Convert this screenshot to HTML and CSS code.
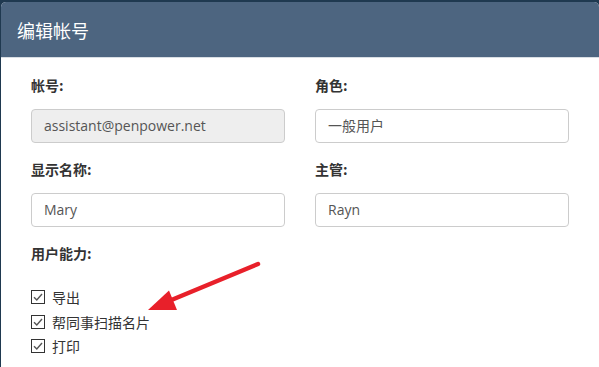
FILE: index.html
```html
<!DOCTYPE html>
<html lang="zh-CN">
<head>
    <meta charset="UTF-8">
    <title>编辑帐号</title>
    <link rel="stylesheet" href="styles.css">
</head>
<body>
    <div class="modal">
        <div class="modal-header">
            <h4 class="modal-title">编辑帐号</h4>
        </div>
        <div class="modal-body">
            <div class="form-grid">
                <div class="form-group">
                    <label class="field-label">帐号:</label>
                    <div class="form-control readonly">assistant@penpower.net</div>
                </div>
                <div class="form-group">
                    <label class="field-label">角色:</label>
                    <div class="form-control">一般用户</div>
                </div>
                <div class="form-group">
                    <label class="field-label">显示名称:</label>
                    <div class="form-control">Mary</div>
                </div>
                <div class="form-group">
                    <label class="field-label">主管:</label>
                    <div class="form-control">Rayn</div>
                </div>
            </div>

            <label class="field-label">用户能力:</label>
            <ul class="check-list">
                <li>
                    <svg class="check-box" width="14" height="14" viewBox="0 0 14 14"><rect x="0.5" y="0.5" width="13" height="13" fill="#fff" stroke="#333"/><path d="M3 7.2 L5.8 10 L11 4" fill="none" stroke="#555" stroke-width="1.4"/></svg>
                    导出
                </li>
                <li>
                    <svg class="check-box" width="14" height="14" viewBox="0 0 14 14"><rect x="0.5" y="0.5" width="13" height="13" fill="#fff" stroke="#333"/><path d="M3 7.2 L5.8 10 L11 4" fill="none" stroke="#555" stroke-width="1.4"/></svg>
                    帮同事扫描名片
                </li>
                <li>
                    <svg class="check-box" width="14" height="14" viewBox="0 0 14 14"><rect x="0.5" y="0.5" width="13" height="13" fill="#fff" stroke="#333"/><path d="M3 7.2 L5.8 10 L11 4" fill="none" stroke="#555" stroke-width="1.4"/></svg>
                    打印
                </li>
            </ul>

            <!-- 标注箭头 -->
            <svg class="note-arrow" width="120" height="60" viewBox="0 0 120 60">
                <line x1="111" y1="6" x2="22" y2="43" stroke="#e8202a" stroke-width="4.5" stroke-linecap="round"/>
                <polygon points="1,52 22,32.5 30,52" fill="#e8202a"/>
            </svg>
        </div>
    </div>
</body>
</html>
```

FILE: styles.css
```css
* {
    margin: 0;
    padding: 0;
    box-sizing: border-box;
}

body {
    background-color: #1f3950;
    font-family: "Open Sans", "Noto Sans CJK SC", sans-serif;
    color: #333;
    padding: 2px 0 0 1px;
    height: 367px;
    overflow: hidden;
}

.modal {
    background: #fff;
    border-radius: 5px 5px 0 0;
    overflow: hidden;
    height: 100%;
}

.modal-header {
    background: #4d6580;
    height: 56px;
    padding: 0 16px;
    display: flex;
    align-items: center;
    border-bottom: 1px solid #d9dee4;
}

.modal-title {
    color: #fff;
    font-size: 18px;
    font-weight: normal;
    font-family: "Noto Sans CJK SC", sans-serif;
}

.modal-body {
    position: relative;
    padding: 17px 30px 0 30px;
}

.form-grid {
    display: grid;
    grid-template-columns: 254px 254px;
    column-gap: 30px;
}

.form-group {
    margin-bottom: 16px;
}

.field-label {
    display: block;
    font-size: 14px;
    font-weight: bold;
    font-family: "Noto Sans CJK SC", sans-serif;
    line-height: 20px;
    margin-bottom: 14px;
}

.form-control {
    height: 34px;
    border: 1px solid #ccc;
    border-radius: 4px;
    padding: 0 12px;
    font-size: 14px;
    line-height: 32px;
    color: #555;
    background: #fff;
}

.form-control.readonly {
    background: #eee;
}

.check-list {
    list-style: none;
    margin-top: 22px;
}

.check-list li {
    display: flex;
    align-items: center;
    gap: 7px;
    height: 24.5px;
    font-size: 14px;
    font-family: "Noto Sans CJK SC", sans-serif;
}

.note-arrow {
    position: absolute;
    left: 146px;
    top: 200px;
}
```
